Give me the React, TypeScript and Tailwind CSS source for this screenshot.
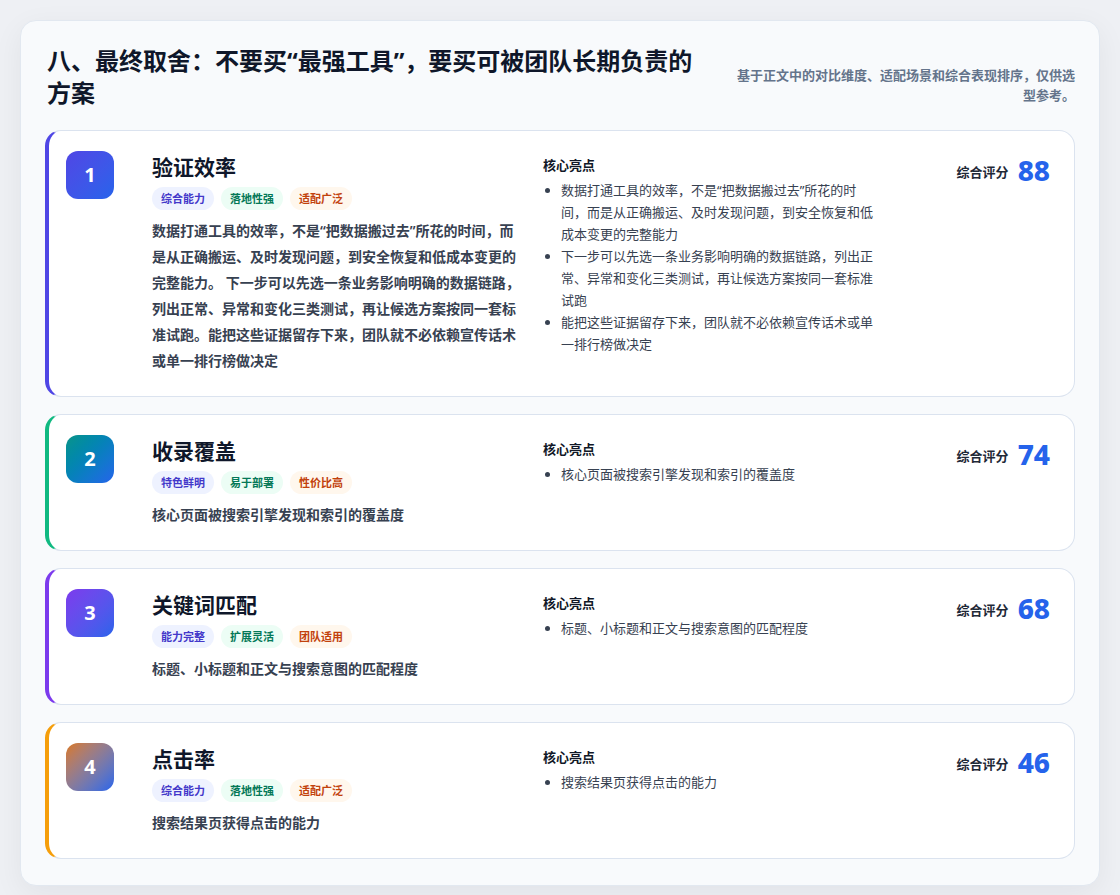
const FONT = { fontFamily: '"Noto Sans", "Noto Sans CJK SC", sans-serif' }

const TAGS_A = ['综合能力', '落地性强', '适配广泛']
const TAGS_B = ['特色鲜明', '易于部署', '性价比高']
const TAGS_C = ['能力完整', '扩展灵活', '团队适用']

const TAG_STYLES = [
  'bg-[#eef2ff] text-[#4338ca]',
  'bg-[#ecfdf5] text-[#047857]',
  'bg-[#fff7ed] text-[#c2410c]',
]

const ITEMS = [
  {
    n: 1,
    title: '验证效率',
    tags: TAGS_A,
    border: 'border-l-[#4f46e5]',
    badge: 'bg-gradient-to-br from-[#4f46e5] to-[#2563eb]',
    desc: '数据打通工具的效率，不是“把数据搬过去”所花的时间，而是从正确搬运、及时发现问题，到安全恢复和低成本变更的完整能力。 下一步可以先选一条业务影响明确的数据链路，列出正常、异常和变化三类测试，再让候选方案按同一套标准试跑。能把这些证据留存下来，团队就不必依赖宣传话术或单一排行榜做决定',
    points: [
      '数据打通工具的效率，不是“把数据搬过去”所花的时间，而是从正确搬运、及时发现问题，到安全恢复和低成本变更的完整能力',
      '下一步可以先选一条业务影响明确的数据链路，列出正常、异常和变化三类测试，再让候选方案按同一套标准试跑',
      '能把这些证据留存下来，团队就不必依赖宣传话术或单一排行榜做决定',
    ],
    score: 88,
  },
  {
    n: 2,
    title: '收录覆盖',
    tags: TAGS_B,
    border: 'border-l-[#10b981]',
    badge: 'bg-gradient-to-br from-[#0d9488] to-[#2563eb]',
    desc: '核心页面被搜索引擎发现和索引的覆盖度',
    points: ['核心页面被搜索引擎发现和索引的覆盖度'],
    score: 74,
  },
  {
    n: 3,
    title: '关键词匹配',
    tags: TAGS_C,
    border: 'border-l-[#7c3aed]',
    badge: 'bg-gradient-to-br from-[#7c3aed] to-[#2563eb]',
    desc: '标题、小标题和正文与搜索意图的匹配程度',
    points: ['标题、小标题和正文与搜索意图的匹配程度'],
    score: 68,
  },
  {
    n: 4,
    title: '点击率',
    tags: TAGS_A,
    border: 'border-l-[#f59e0b]',
    badge: 'bg-gradient-to-br from-[#d97706] to-[#2563eb]',
    desc: '搜索结果页获得点击的能力',
    points: ['搜索结果页获得点击的能力'],
    score: 46,
  },
]

export default function App() {
  return (
    <div style={FONT} className="min-h-[895px] bg-[#eef0f4] px-5 pt-5 pb-5">
      <div className="rounded-2xl border border-[#e2e8f0] bg-[#f8fafc] pl-6 pr-6 pt-6 pb-[26px] shadow-[0_8px_30px_rgba(15,23,42,0.06)]">
        {/* 标题 */}
        <div className="flex items-end justify-between pl-0.5">
          <h2 className="w-[660px] text-[24px] font-bold leading-[32px] text-[#0f172a]">
            八、最终取舍：不要买“最强工具”，要买可被团队长期负责的方案
          </h2>
          <p className="mb-1 w-[342px] text-right text-[13px] font-semibold leading-[20px] text-[#64748b]">
            基于正文中的对比维度、适配场景和综合表现排序，仅供选型参考。
          </p>
        </div>

        <div className="mt-[21px] flex flex-col gap-[17px]">
          {ITEMS.map((it) => (
            <div
              key={it.n}
              className={`flex rounded-2xl border border-l-4 border-[#dbe3ef] bg-white pl-[17px] pr-6 pt-5 pb-[22px] ${it.border}`}
            >
              <div
                className={`flex h-12 w-12 shrink-0 items-center justify-center rounded-xl text-[20px] font-bold text-white ${it.badge}`}
              >
                {it.n}
              </div>
              <div className="ml-[38px] w-[370px] shrink-0">
                <h3 className="text-[21px] font-bold leading-[32px] text-[#0f172a]">{it.title}</h3>
                <div className="mt-[4px] flex gap-[7px]">
                  {it.tags.map((t, i) => (
                    <span
                      key={t}
                      className={`rounded-full px-[9px] py-[2px] text-[11px] font-semibold leading-[19px] ${TAG_STYLES[i]}`}
                    >
                      {t}
                    </span>
                  ))}
                </div>
                <p className="mt-[8px] text-[14px] font-semibold leading-[26px] text-[#374151]">{it.desc}</p>
              </div>
              <div className="ml-[21px] w-[338px] shrink-0 pt-[4px]">
                <div className="text-[13px] font-bold leading-[20px] text-[#111827]">核心亮点</div>
                <ul className="mt-[4px] list-disc pl-[18px] text-[13px] leading-[22px] text-[#374151]">
                  {it.points.map((p) => (
                    <li key={p}>{p}</li>
                  ))}
                </ul>
              </div>
              <div className="flex flex-1 items-start justify-end gap-[9px] pt-[1px]">
                <span className="mt-[11px] text-[13px] font-bold text-[#1f2937]">综合评分</span>
                <span className="text-[28px] font-extrabold leading-[36px] text-[#2563eb]">{it.score}</span>
              </div>
            </div>
          ))}
        </div>
      </div>
    </div>
  )
}
